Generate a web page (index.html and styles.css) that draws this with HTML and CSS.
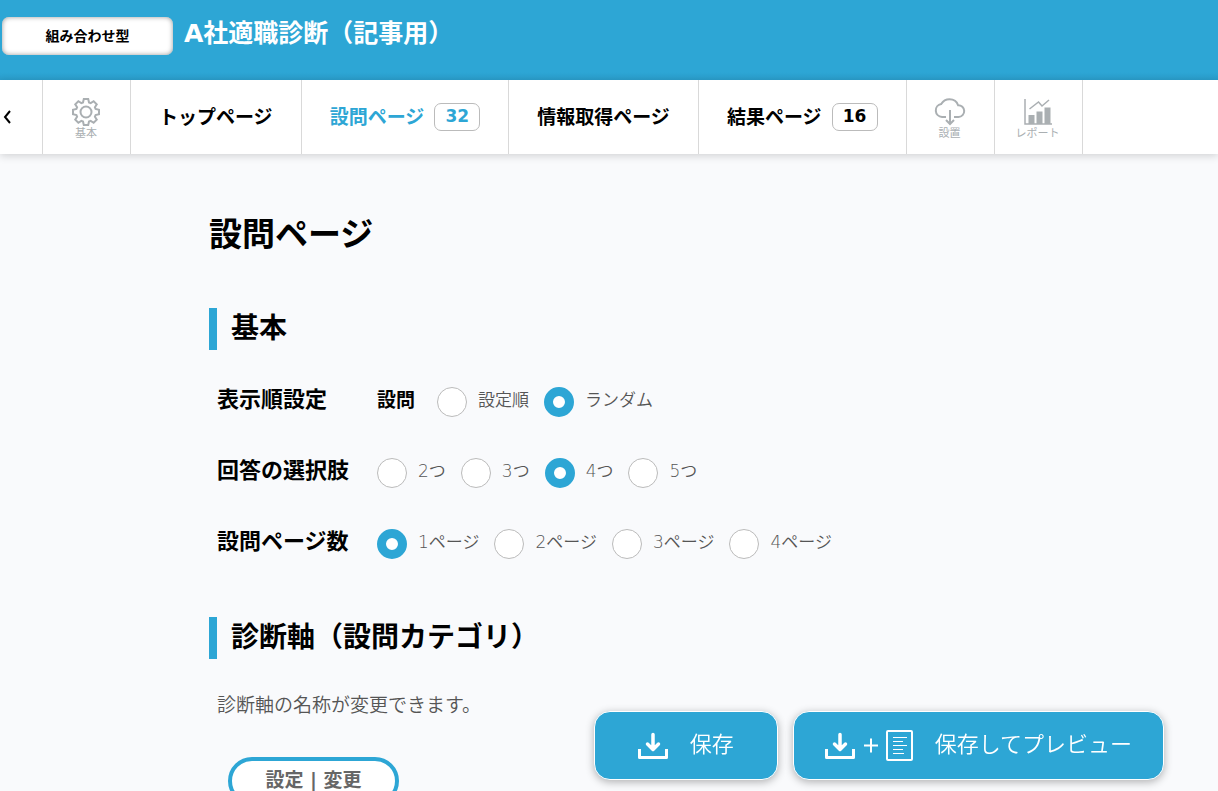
FILE: index.html
```html
<!DOCTYPE html>
<html lang="ja">
	<head>
		<meta charset="UTF-8" />
		<meta name="viewport" content="width=device-width, initial-scale=1.0" />
		<title>設問ページ</title>
		<link rel="stylesheet" href="styles.css">
	</head>

	<body>
		<header class="header">
			<span class="type">組み合わせ型</span>
			<div class="project">A社適職診断（記事用）</div>
		</header>

		<nav class="tabs">
			<a class="back" href="#" aria-label="戻る">
				<svg width="10" height="16" viewBox="0 0 10 16"><path d="M8 2L3 8l5 6" /></svg>
			</a>
			<a class="tab icon-tab" href="#">
				<svg width="28" height="28" viewBox="-14 -14 28 28">
					<path class="line" d="M-3-9.6L-2.2-13H2.2L3-9.6L4.67-8.91L7.64-10.75L10.75-7.64L8.91-4.67L9.6-3L13-2.2V2.2L9.6 3L8.91 4.67L10.75 7.64L7.64 10.75L4.67 8.91L3 9.6L2.2 13H-2.2L-3 9.6L-4.67 8.91L-7.64 10.75L-10.75 7.64L-8.91 4.67L-9.6 3L-13 2.2V-2.2L-9.6-3L-8.91-4.67L-10.75-7.64L-7.64-10.75L-4.67-8.91Z" />
					<circle class="line" r="5.5" />
				</svg>
				<span>基本</span>
			</a>
			<a class="tab" href="#"><span class="tab-text">トップページ</span></a>
			<a class="tab active" href="#"><span class="tab-text">設問ページ</span><span class="count">32</span></a>
			<a class="tab" href="#"><span class="tab-text">情報取得ページ</span></a>
			<a class="tab" href="#"><span class="tab-text">結果ページ</span><span class="count">16</span></a>
			<a class="tab icon-tab" href="#">
				<svg width="32" height="28" viewBox="0 0 32 28">
					<path class="line" d="M12 19H8a6.500 6.500 0 0 1-.8-12.900C9 3 12 1.200 15.500 1.200c4.500 0 7.500 2.600 8.600 6a5.900 5.900 0 0 1 .4 11.800H20" />
					<path class="line" d="M16 12v14M12 22l4 4 4-4" />
				</svg>
				<span>設置</span>
			</a>
			<a class="tab icon-tab" href="#">
				<svg width="28" height="28" viewBox="0 0 28 28">
					<path class="thin" d="M1 1v25h27M5.500 11l9-7 3.500 4 7-6" />
					<path class="fill" d="M4.500 17h6v9h-6zM12.500 13.500h6V26h-6zM20.500 9.500h6V26h-6z" />
				</svg>
				<span>レポート</span>
			</a>
		</nav>

		<main class="container">
			<h1 class="title">設問ページ</h1>

			<h2 class="section-title">基本</h2>

			<div class="control" role="radiogroup" aria-labelledby="order">
				<div class="control-label" id="order">表示順設定</div>
				<div class="sub-label">設問</div>
				<label class="option"><input type="radio" name="order" /><span>設定順</span></label>
				<label class="option"><input type="radio" name="order" checked /><span>ランダム</span></label>
			</div>

			<div class="control" role="radiogroup" aria-labelledby="choices">
				<div class="control-label" id="choices">回答の選択肢</div>
				<label class="option"><input type="radio" name="choices" /><span>2つ</span></label>
				<label class="option"><input type="radio" name="choices" /><span>3つ</span></label>
				<label class="option"><input type="radio" name="choices" checked /><span>4つ</span></label>
				<label class="option"><input type="radio" name="choices" /><span>5つ</span></label>
			</div>

			<div class="control" role="radiogroup" aria-labelledby="pages">
				<div class="control-label" id="pages">設問ページ数</div>
				<label class="option"><input type="radio" name="pages" checked /><span>1ページ</span></label>
				<label class="option"><input type="radio" name="pages" /><span>2ページ</span></label>
				<label class="option"><input type="radio" name="pages" /><span>3ページ</span></label>
				<label class="option"><input type="radio" name="pages" /><span>4ページ</span></label>
			</div>

			<h2 class="section-title">診断軸（設問カテゴリ）</h2>
			<p class="note">診断軸の名称が変更できます。</p>
			<button class="edit" type="button">設定 | 変更</button>
		</main>

		<!-- always on screen -->
		<div class="actions">
			<button class="save" type="button">
				<svg width="30" height="28" viewBox="0 0 30 28">
					<path class="tray" d="M1.500 17v8.500h27V17" />
					<path class="arrow" d="M15 2.500v14M9.500 12l5.500 5.500 5.500-5.500" />
				</svg>
				<span class="save-text">保存</span>
			</button>
			<button class="save" type="button">
				<svg width="88" height="32" viewBox="0 0 88 32">
					<path class="tray" d="M1.500 19v8.500h27V19" />
					<path class="arrow" d="M15 4.500v14M9.500 14l5.500 5.500 5.500-5.500" />
					<path class="plus" d="M39 15.500h14M46 8.500v14" />
					<rect class="plus" x="62" y="1" width="25" height="29" rx="1" />
					<path class="rows" d="M68 7.500h14M68 11.500h10M68 15.500h14M68 19.500h10M68 23.500h11" />
				</svg>
				<span class="save-text">保存してプレビュー</span>
			</button>
		</div>
	</body>
</html>
```

FILE: styles.css
```css
* {
	box-sizing: border-box;
}

body,
button {
	font-family: "DejaVu Sans", "Noto Sans CJK JP", sans-serif;
}

body {
	margin: 0;
	background-color: #f9fafc;
	color: #000;
}

svg {
	display: block;
	fill: none;
}

.header {
	display: flex;
	align-items: flex-start;
	gap: 11px;
	height: 80px;
	padding: 17px 2px;
	background: linear-gradient(#2da6d5 72px, #2a9dcb);
}

.type {
	width: 171px;
	border-radius: 7px;
	background-color: #fff;
	box-shadow: inset 0 0 5px #999;
	font-size: 14px;
	font-weight: bold;
	line-height: 38px;
	text-align: center;
}

.project {
	color: #fff;
	font-size: 25px;
	font-weight: bold;
	line-height: 34px;
}

.tabs {
	display: flex;
	height: 74px;
	background-color: #fff;
	box-shadow: 0 2px 8px rgba(0, 0, 0, 0.16);
}

.back,
.tab {
	display: flex;
	align-items: center;
	border-right: 1px solid #d9d9d9;
	text-decoration: none;
	white-space: nowrap;
}

.back {
	width: 43px;
	padding-left: 2px;
}

.back svg {
	stroke: #000;
	stroke-width: 2;
}

.tab {
	gap: 10px;
	padding: 0 28px;
	color: #000;
	font-size: 19px;
	font-weight: bold;
}

.tab-text {
	padding-bottom: 4px;
}

.active {
	color: #2da6d5;
}

.count {
	width: 46px;
	padding-bottom: 2px;
	border: 1px solid #bbb;
	border-radius: 7px;
	font-size: 17px;
	line-height: 24px;
	text-align: center;
}

.icon-tab {
	flex-direction: column;
	justify-content: center;
	gap: 0;
	width: 88px;
	padding: 5px 1px 0 0;
	color: #aaafb2;
	font-size: 11px;
	font-weight: normal;
	line-height: 15px;
}

.line,
.thin {
	stroke: #aaafb2;
	stroke-width: 2;
}

.thin {
	stroke-width: 1.5;
}

.fill {
	fill: #aaafb2;
}

.container {
	max-width: 800px;
	margin: 0 auto;
	padding-top: 56px;
}

.title {
	margin: 0 0 48px;
	font-size: 33px;
	line-height: 50px;
}

.section-title {
	margin: 0 0 31px;
	padding-left: 14px;
	border-left: 8px solid #2da6d5;
	font-size: 28px;
	line-height: 42px;
}

.control {
	display: flex;
	align-items: center;
	height: 42px;
	margin-bottom: 29px;
	padding-left: 8px;
	line-height: 42px;
}

.control + .section-title {
	margin-top: 52px;
}

.control-label,
.sub-label,
.option span {
	padding-bottom: 4px;
}

.control-label {
	width: 160px;
	font-size: 22px;
	font-weight: bold;
}

.sub-label {
	margin-right: 22px;
	font-size: 19px;
	font-weight: bold;
}

.option {
	display: flex;
	align-items: center;
	margin-right: 15px;
	color: #555;
	font-size: 17px;
	font-weight: 350;
}

.option input {
	appearance: none;
	width: 30px;
	height: 30px;
	margin: 0 11px 0 0;
	border: 1px solid #bbb;
	border-radius: 50%;
	background-color: #fff;
}

.option input:checked {
	border: 9px solid #2da6d5;
}

.note {
	margin: 0 0 37px;
	padding-left: 8px;
	color: #555;
	font-size: 19px;
	font-weight: 350;
	line-height: 30px;
}

.edit {
	display: block;
	width: 171px;
	height: 48px;
	margin: 0 0 80px 19px;
	padding: 0 0 6px;
	border: 4px solid #2da6d5;
	border-radius: 24px;
	background-color: #fff;
	color: #666;
	font-size: 19px;
	font-weight: bold;
}

.actions {
	position: fixed;
	right: 54px;
	bottom: 11px;
	display: flex;
	gap: 15px;
}

.save {
	display: flex;
	align-items: center;
	height: 69px;
	padding: 0 31px;
	border: 1px solid #fff;
	border-radius: 16px;
	background-color: #2da6d5;
	box-shadow: 0 2px 8px rgba(0, 0, 0, 0.3);
	color: #fff;
	font-size: 22px;
	font-weight: 350;
}

.save:first-child {
	padding: 0 43px;
}

.save-text {
	margin-left: 22px;
	padding-bottom: 8px;
}

.tray,
.arrow {
	stroke: #fff;
	stroke-width: 3;
	stroke-linejoin: round;
}

.arrow {
	stroke-width: 3.5;
	stroke-linecap: round;
}

.plus {
	stroke: #fff;
	stroke-width: 2;
}

.rows {
	stroke: #fff;
}
```
